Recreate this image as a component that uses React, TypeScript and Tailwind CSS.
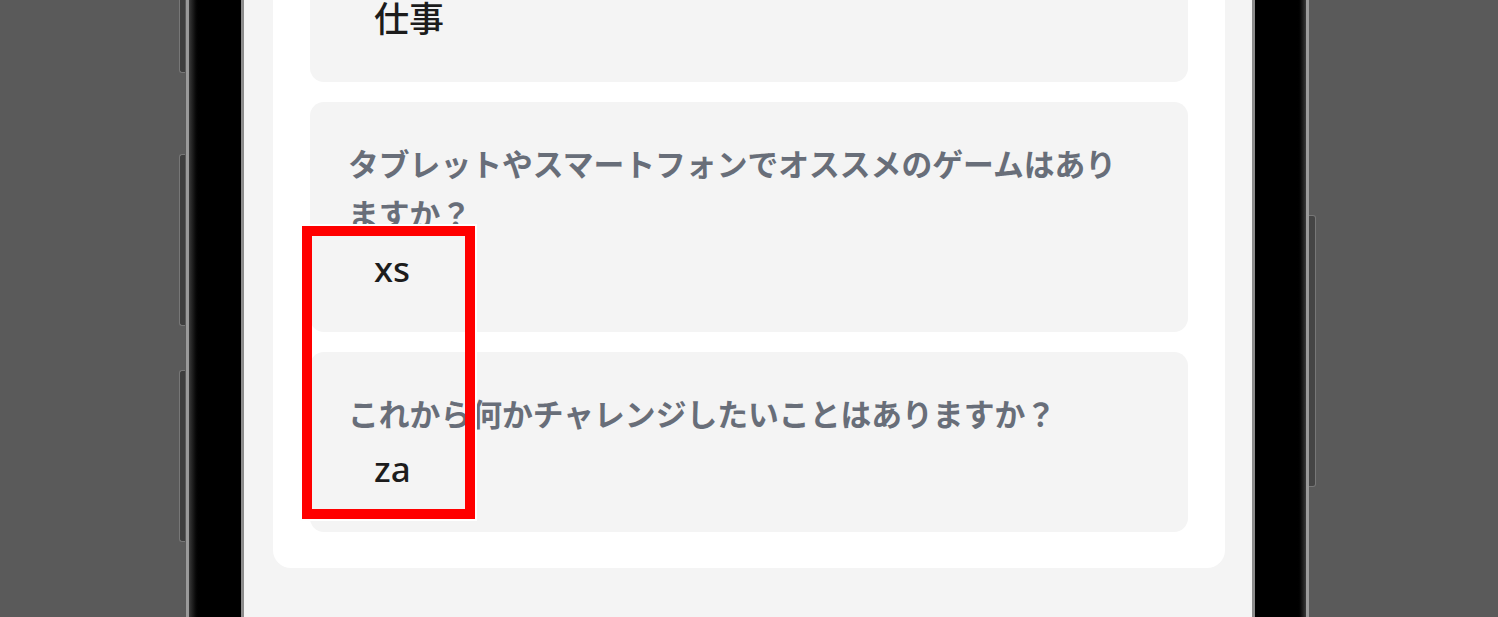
const cjk = '"Noto Sans CJK JP", "Noto Sans", sans-serif';
const latin = '"Noto Sans", "Noto Sans CJK JP", sans-serif';

type Item = { question: string; answer: string };

const items: Item[] = [
  { question: '今一番がんばっていることは何ですか？', answer: '仕事' },
  { question: 'タブレットやスマートフォンでオススメのゲームはありますか？', answer: 'xs' },
  { question: 'これから何かチャレンジしたいことはありますか？', answer: 'za' },
];

function AnswerBox({ item }: { item: Item }) {
  return (
    <div className="rounded-[14px] bg-[#f4f4f4] pl-[38px] pr-[50px] pt-[36px] pb-[38px]">
      <p className="text-[30.8px] leading-[50px] font-bold text-[#686e79]" style={{ fontFamily: cjk }}>
        {item.question}
      </p>
      <p className="mt-[6px] pl-[26px] text-[35px] leading-[50px] font-medium text-[#1c1c1c]" style={{ fontFamily: latin }}>
        {item.answer}
      </p>
    </div>
  );
}

function SideButton({ side, top, height }: { side: 'left' | 'right'; top: number; height: number }) {
  return (
    <div
      className={
        side === 'left'
          ? 'absolute left-[179px] w-[6px] rounded-l-[3px] bg-[#3e3e3e] border-l border-t border-b border-[#777]'
          : 'absolute left-[1309px] w-[7px] rounded-r-[3px] bg-[#454545] border-r border-t border-b border-[#777]'
      }
      style={{ top, height }}
    />
  );
}

export default function App() {
  return (
    <div className="relative flex h-[617px] w-full overflow-hidden bg-[#5a5a5a]">
      <SideButton side="left" top={-40} height={113} />
      <SideButton side="left" top={154} height={172} />
      <SideButton side="left" top={370} height={172} />
      <SideButton side="right" top={215} height={272} />

      {/* phone body */}
      <div className="ml-[186px] flex h-full w-[1123px]">
        <div className="w-[3px] bg-[#9a9a9a]" />
        <div className="w-[11px] bg-linear-to-r from-[#3a3a3a] to-black" />
        <div className="w-[41px] bg-black" />
        <div className="w-[3px] bg-[#8c8c8c]" />

        {/* screen */}
        <div className="flex h-full w-[1008px] flex-col justify-end overflow-hidden bg-[#f4f4f4] pb-[49px]">
          <div className="ml-[29px] mr-[27px] flex flex-col gap-[20px] rounded-[18px] bg-white px-[37px] pb-[36px] pt-[37px]">
            {items.map((item) => (
              <AnswerBox key={item.answer} item={item} />
            ))}
          </div>
        </div>

        <div className="w-[3px] bg-[#8c8c8c]" />
        <div className="w-[42px] bg-black" />
        <div className="w-[9px] bg-linear-to-r from-black to-[#3a3a3a]" />
        <div className="w-[3px] bg-[#9a9a9a]" />
      </div>

      {/* annotation */}
      <div className="absolute left-[302px] top-[226px] h-[293px] w-[173px] border-[10px] border-[#ff0000] outline-2 outline-white" />
    </div>
  );
}
